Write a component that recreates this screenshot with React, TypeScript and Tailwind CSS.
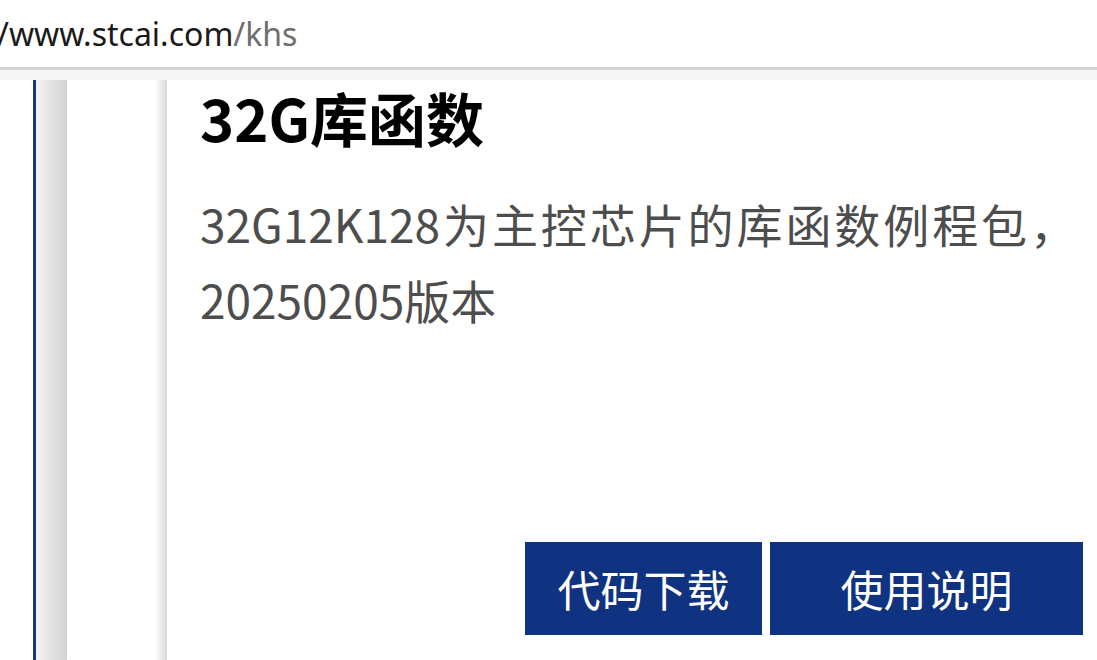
export default function App() {
  return (
    <div className="h-[660px] w-[1097px] overflow-hidden bg-white flex flex-col font-['Noto_Sans_CJK_SC',sans-serif]">
      {/* address bar */}
      <div className="h-[67px] shrink-0 bg-white flex items-center">
        <div className="-ml-[3px] text-[32px] leading-none font-['Noto_Sans','Noto_Sans_CJK_SC',sans-serif] text-[#1a1a1a]">
          /www.stcai.com<span className="text-[#6e6e6e]">/khs</span>
        </div>
      </div>
      <div className="h-[3px] shrink-0 bg-[#d4d4d4]" />
      <div className="h-[10px] shrink-0 bg-[#f6f6f6]" />

      {/* page */}
      <div className="flex flex-1 min-h-0">
        <div className="w-[33px] shrink-0 bg-white" />
        <div className="w-[3px] shrink-0 bg-[#143783]" />
        <div className="w-[31px] shrink-0 bg-gradient-to-r from-[#f3f3f3] to-[#d2d2d2]" />
        <div className="w-[88px] shrink-0 bg-white" />
        <div className="w-[12px] shrink-0 bg-gradient-to-r from-white to-[#d9d9d9]" />

        <div className="flex-1 bg-white pl-[33px] pr-[14px] flex flex-col">
          <h1 className="text-[58px] leading-[1.2] font-bold text-black mt-[3px]">32G库函数</h1>
          <p className="mt-[32px] w-[876px] text-justify text-[46px] leading-[76px] text-[#4d4d4d]">
            32G12K128为主控芯片的库函数例程包，20250205版本
          </p>
          <div className="mt-auto mb-[25px] flex justify-end gap-[8px]">
            <button className="w-[237px] h-[93px] bg-[#103381] text-white text-[43px] leading-none">
              代码下载
            </button>
            <button className="w-[313px] h-[93px] bg-[#103381] text-white text-[43px] leading-none">
              使用说明
            </button>
          </div>
        </div>
      </div>
    </div>
  );
}
